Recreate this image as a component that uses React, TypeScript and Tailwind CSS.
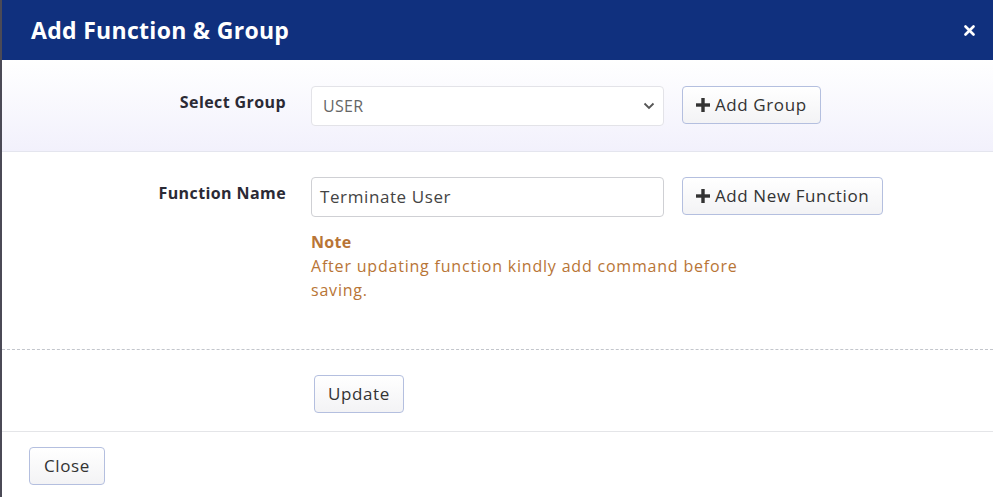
import React from "react";

const font = { fontFamily: '"Open Sans", "Noto Sans", sans-serif' };

function Btn({ children, className = "" }: { children: React.ReactNode; className?: string }) {
  return (
    <button
      className={
        "flex items-center rounded-[4px] border border-[#b4bfdf] bg-gradient-to-b from-white to-[#f3f3f5] text-[17px] tracking-[0.6px] text-[#333] " +
        className
      }
    >
      {children}
    </button>
  );
}

function Plus() {
  return (
    <svg width="14" height="14" viewBox="0 0 14 14" className="mr-[5px]">
      <rect x="5.3" y="0" width="3.4" height="14" fill="#333" />
      <rect x="0" y="5.3" width="14" height="3.4" fill="#333" />
    </svg>
  );
}

export default function App() {
  return (
    <div className="flex h-[497px] w-[993px] overflow-hidden bg-[#4b4a56]" style={font}>
      <div className="ml-[2px] flex flex-1 flex-col bg-white">
        <div className="flex h-[60px] items-center justify-between bg-[#10307e] pl-[29px] pr-[18px]">
          <h1 className="text-[23px] font-bold tracking-[0.3px] text-white">Add Function &amp; Group</h1>
          <svg width="11" height="11" viewBox="0 0 11 11">
            <path d="M1.5 1.5 L9.5 9.5 M9.5 1.5 L1.5 9.5" stroke="white" strokeWidth="2.6" strokeLinecap="round" />
          </svg>
        </div>
        <div className="flex h-[92px] border-b border-[#e4e5ee] bg-gradient-to-b from-white to-[#f2f1fc] pt-[26px]">
          <div className="w-[284px] pt-[4px] text-right text-[16px] font-bold tracking-[0.4px] text-[#2b2a35]">Select Group</div>
          <div className="ml-[25px] flex h-[40px] w-[353px] items-center justify-between rounded-[4px] border border-[#e3e3e8] bg-white pl-[11px] pr-[8px] text-[16px] tracking-[0.3px] text-[#666]">
            <span>USER</span>
            <svg width="12" height="8" viewBox="0 0 12 8">
              <path d="M1.5 1.5 L6 6 L10.5 1.5" stroke="#555" strokeWidth="1.8" fill="none" />
            </svg>
          </div>
          <Btn className="ml-[18px] h-[38px] px-[13px]">
            <Plus />
            Add Group
          </Btn>
        </div>
        <div className="flex h-[198px] border-b border-dashed border-[#c3c6cc] pt-[25px]">
          <div className="w-[284px] pt-[4px] text-right text-[16px] font-bold tracking-[0.4px] text-[#2b2a35]">Function Name</div>
          <div className="ml-[25px] flex w-[353px] flex-col">
            <div className="flex h-[40px] items-center rounded-[4px] border border-[#cfd0d4] bg-white pl-[8px] text-[17px] tracking-[0.6px] text-[#444]">
              Terminate User
            </div>
            <div className="mt-[13px] text-[16px] leading-[24px] tracking-[0.8px] text-[#b87536]">
              <div className="font-bold tracking-[0.3px]">Note</div>
              <div className="w-[450px]">After updating function kindly add command before saving.</div>
            </div>
          </div>
          <Btn className="ml-[18px] h-[38px] self-start px-[13px]">
            <Plus />
            Add New Function
          </Btn>
        </div>
        <div className="flex h-[82px] border-b border-[#e4e5e8] pl-[312px] pt-[25px]">
          <Btn className="h-[38px] px-[13px]">Update</Btn>
        </div>
        <div className="flex pl-[27px] pt-[15px]">
          <Btn className="h-[38px] px-[14px]">Close</Btn>
        </div>
      </div>
    </div>
  );
}
